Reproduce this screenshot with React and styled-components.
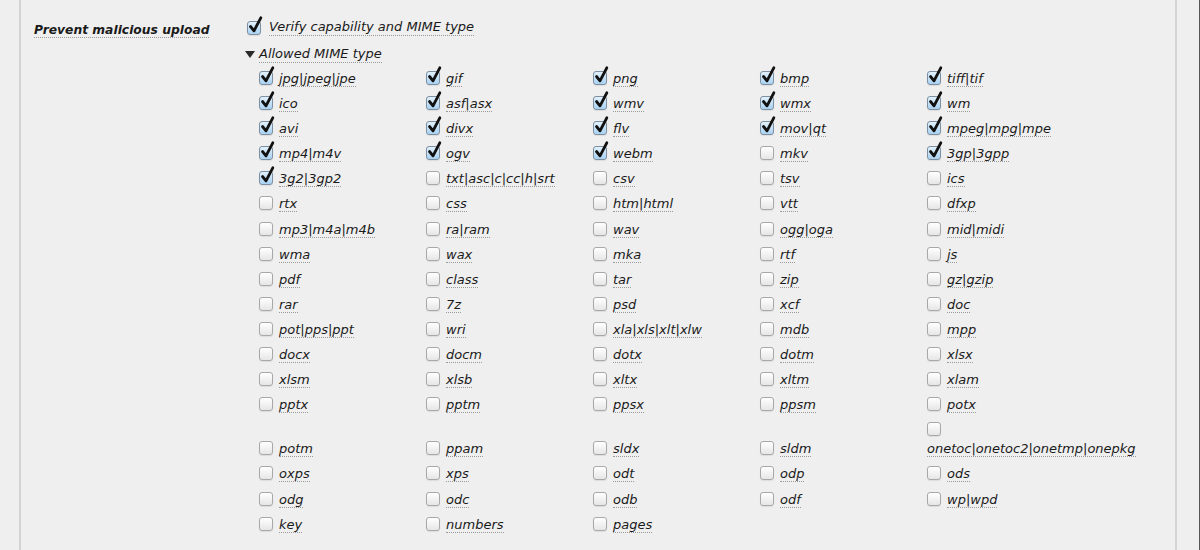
import React from "react";
import styled, { createGlobalStyle } from "styled-components";

const Global = createGlobalStyle`
  html, body { margin: 0; padding: 0; background: #efefef; }
  body { font-family: "DejaVu Sans", "Liberation Sans", sans-serif; color: #1a1a1a; }
`;

const checkedList = new Set([
  "jpg|jpeg|jpe","gif","png","bmp","tiff|tif","ico","asf|asx","wmv","wmx","wm",
  "avi","divx","flv","mov|qt","mpeg|mpg|mpe","mp4|m4v","ogv","webm","3gp|3gpp","3g2|3gp2",
]);

const types = [
  "jpg|jpeg|jpe","gif","png","bmp","tiff|tif",
  "ico","asf|asx","wmv","wmx","wm",
  "avi","divx","flv","mov|qt","mpeg|mpg|mpe",
  "mp4|m4v","ogv","webm","mkv","3gp|3gpp",
  "3g2|3gp2","txt|asc|c|cc|h|srt","csv","tsv","ics",
  "rtx","css","htm|html","vtt","dfxp",
  "mp3|m4a|m4b","ra|ram","wav","ogg|oga","mid|midi",
  "wma","wax","mka","rtf","js",
  "pdf","class","tar","zip","gz|gzip",
  "rar","7z","psd","xcf","doc",
  "pot|pps|ppt","wri","xla|xls|xlt|xlw","mdb","mpp",
  "docx","docm","dotx","dotm","xlsx",
  "xlsm","xlsb","xltx","xltm","xlam",
  "pptx","pptm","ppsx","ppsm","potx",
  "potm","ppam","sldx","sldm","onetoc|onetoc2|onetmp|onepkg",
  "oxps","xps","odt","odp","ods",
  "odg","odc","odb","odf","wp|wpd",
  "key","numbers","pages",
];

const Page = styled.div`
  display: flex;
  height: 550px;
  overflow: hidden;
  border-right: 1px solid #555;
  box-sizing: border-box;
`;

const Gutter = styled.div`
  width: ${p => p.$w}px;
  flex: none;
`;

const Panel = styled.div`
  flex: none;
  width: 1158px;
  border-left: 2px solid #d4d4d4;
  border-right: 2px solid #d4d4d4;
  display: flex;
  align-items: flex-start;
  padding-top: 18px;
  box-sizing: border-box;
`;

const FieldLabel = styled.div`
  width: 211px;
  padding-left: 13px;
  flex: none;
  font-weight: bold;
  font-style: italic;
  line-height: 19px;
  padding-top: 1px;
`;

const Dotted = styled.span`
  border-bottom: 1px dotted #9a9a9a;
  white-space: nowrap;
  font-style: italic;
  font-size: ${p => p.$size || 13}px;
  line-height: 16px;
`;

const Field = styled.div`
  flex: 1;
  min-width: 0;
  font-size: 13px;
  font-style: italic;
  line-height: 19px;
`;

const Line = styled.div`
  display: flex;
  align-items: center;
  gap: ${p => p.$gap || 6}px;
  height: 19px;
  margin-left: ${p => p.$indent || 0}px;
  margin-bottom: ${p => p.$mb || 0}px;
`;

const Triangle = styled.span`
  width: 0;
  height: 0;
  border-left: 5px solid transparent;
  border-right: 5px solid transparent;
  border-top: 7px solid #2a2a2a;
`;

const Grid = styled.div`
  display: grid;
  grid-template-columns: repeat(5, 167px);
  row-gap: 6.1px;
  align-items: end;
  margin-left: 14px;
`;

const Item = styled.label`
  display: block;
  line-height: 19px;
  font-size: 13px;
`;

const BoxWrap = styled.span`
  display: inline-block;
  position: relative;
  width: 14px;
  height: 14px;
  box-sizing: border-box;
  border-radius: 3px;
  border: 1px solid ${p => (p.$on ? "#7d8fa0" : "#a8a8a8")};
  background: ${p =>
    p.$on
      ? "linear-gradient(#e2f1fc, #a9d2f2)"
      : "linear-gradient(#ffffff, #e6e6e6)"};
  box-shadow: 0 1px 1px rgba(0,0,0,0.08);
  vertical-align: -2px;
  margin-right: ${p => (p.$inline ? 0 : 6)}px;
  flex: none;
`;

const Check = styled.svg`
  position: absolute;
  left: 1px;
  top: -5px;
  overflow: visible;
`;

function Box({ on, inline }) {
  return (
    <BoxWrap $on={on} $inline={inline}>
      {on && (
        <Check width="14" height="16" viewBox="0 0 14 16">
          <path d="M1.5 9.5 L5 13.8 L11.8 0.8" fill="none" stroke="#111" strokeWidth="2.8" strokeLinecap="round" strokeLinejoin="round" />
        </Check>
      )}
    </BoxWrap>
  );
}

export default function App() {
  return (
    <>
      <Global />
      <Page>
        <Gutter $w={19} />
        <Panel>
          <FieldLabel>
            <Dotted $size={12.3}>Prevent malicious upload</Dotted>
          </FieldLabel>
          <Field>
            <Line $indent={2} $gap={8} $mb={8}>
              <Box on inline />
              <Dotted>Verify capability and MIME type</Dotted>
            </Line>
            <Line $gap={4} $mb={5}>
              <Triangle />
              <Dotted>Allowed MIME type</Dotted>
            </Line>
            <Grid>
              {types.map(t => (
                <Item key={t}>
                  <Box on={checkedList.has(t)} />
                  <Dotted>{t}</Dotted>
                </Item>
              ))}
            </Grid>
          </Field>
        </Panel>
      </Page>
    </>
  );
}
